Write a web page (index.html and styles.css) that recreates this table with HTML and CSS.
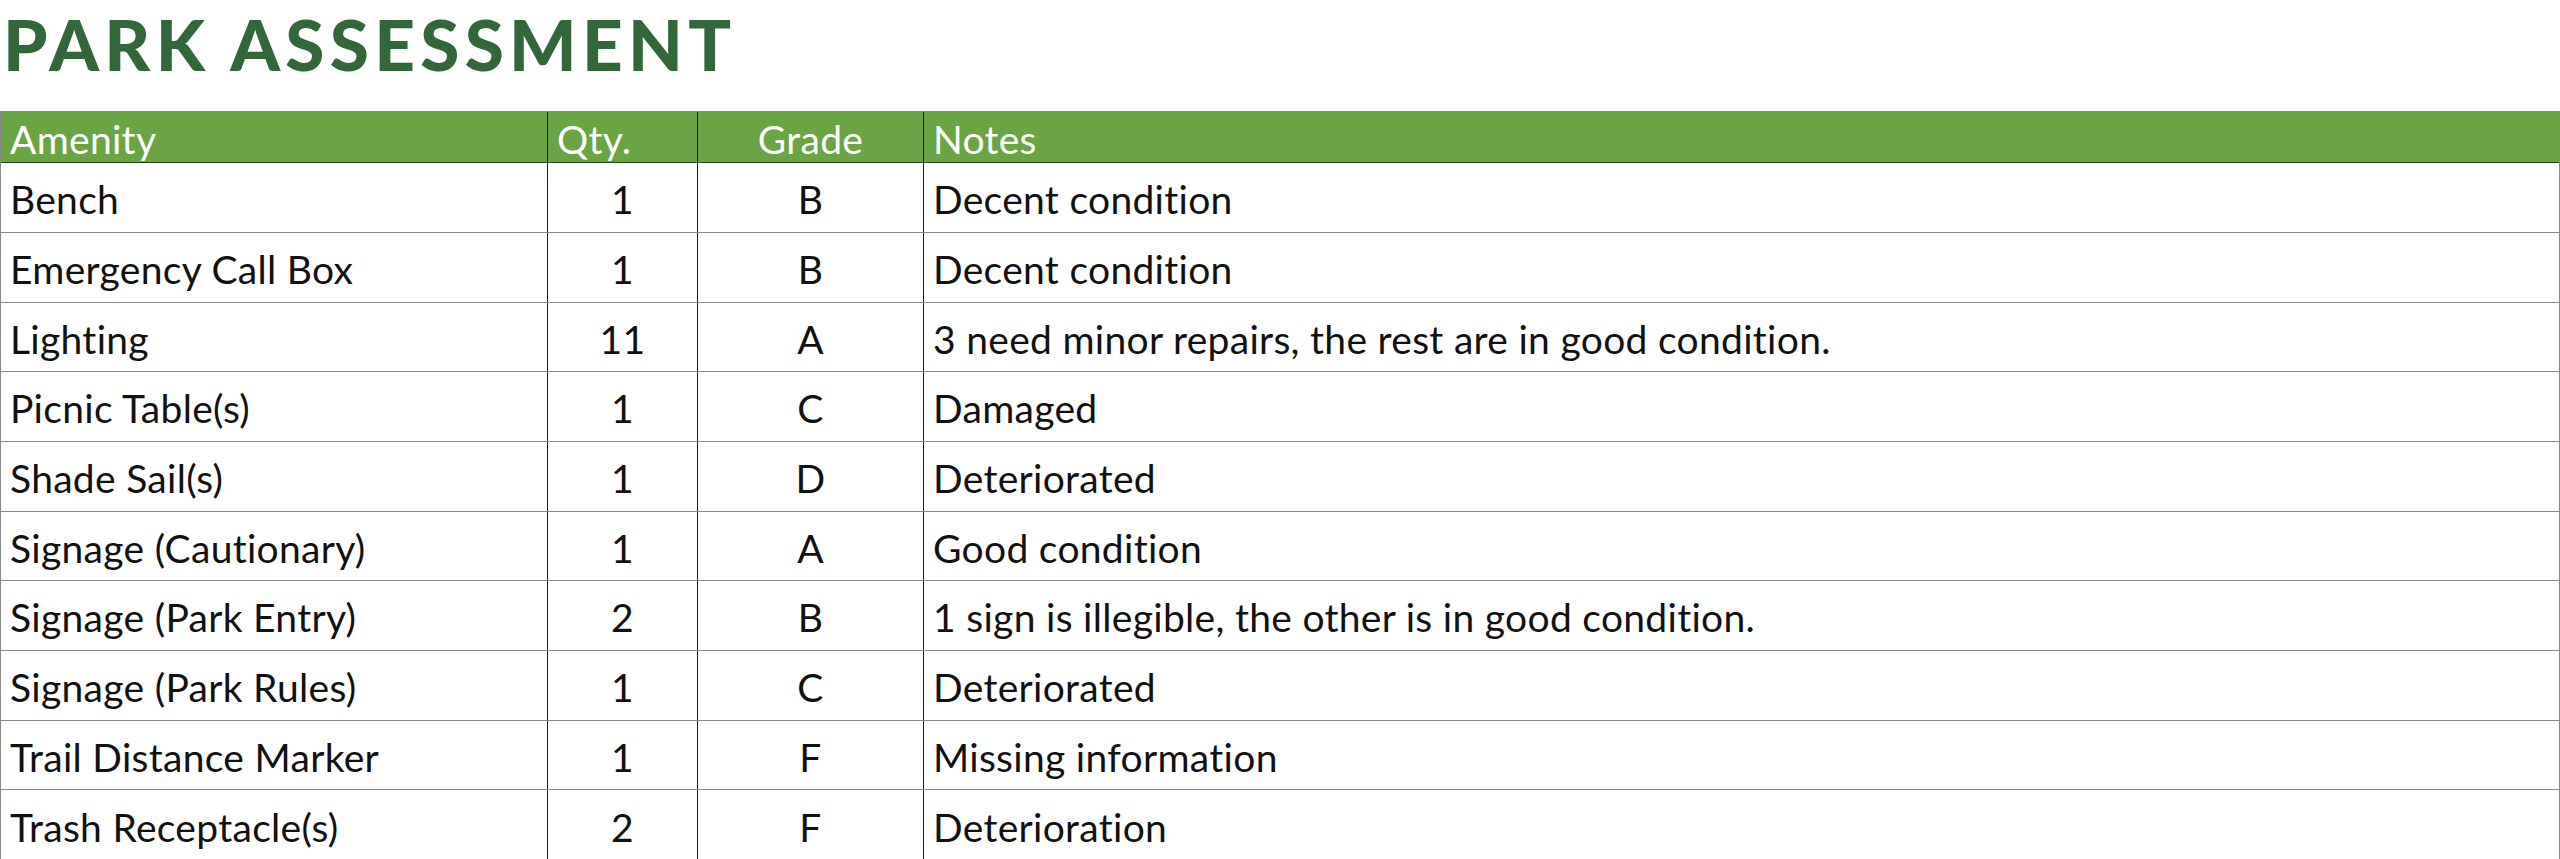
FILE: index.html
```html
<!DOCTYPE html>
<html lang="en">
<head>
<meta charset="utf-8">
<title>Park Assessment</title>
<link rel="stylesheet" href="styles.css">
</head>
<body>
<h1 class="title">PARK ASSESSMENT</h1>
<div class="table">
  <div class="row head">
    <div class="cell">Amenity</div>
    <div class="cell">Qty.</div>
    <div class="cell center">Grade</div>
    <div class="cell">Notes</div>
  </div>
  <div class="body">
    <div class="row"><div class="cell">Bench</div><div class="cell center">1</div><div class="cell center">B</div><div class="cell">Decent condition</div></div>
    <div class="row"><div class="cell">Emergency Call Box</div><div class="cell center">1</div><div class="cell center">B</div><div class="cell">Decent condition</div></div>
    <div class="row"><div class="cell">Lighting</div><div class="cell center">11</div><div class="cell center">A</div><div class="cell">3 need minor repairs, the rest are in good condition.</div></div>
    <div class="row"><div class="cell">Picnic Table(s)</div><div class="cell center">1</div><div class="cell center">C</div><div class="cell">Damaged</div></div>
    <div class="row"><div class="cell">Shade Sail(s)</div><div class="cell center">1</div><div class="cell center">D</div><div class="cell">Deteriorated</div></div>
    <div class="row"><div class="cell">Signage (Cautionary)</div><div class="cell center">1</div><div class="cell center">A</div><div class="cell">Good condition</div></div>
    <div class="row"><div class="cell">Signage (Park Entry)</div><div class="cell center">2</div><div class="cell center">B</div><div class="cell">1 sign is illegible, the other is in good condition.</div></div>
    <div class="row"><div class="cell">Signage (Park Rules)</div><div class="cell center">1</div><div class="cell center">C</div><div class="cell">Deteriorated</div></div>
    <div class="row"><div class="cell">Trail Distance Marker</div><div class="cell center">1</div><div class="cell center">F</div><div class="cell">Missing information</div></div>
    <div class="row"><div class="cell">Trash Receptacle(s)</div><div class="cell center">2</div><div class="cell center">F</div><div class="cell">Deterioration</div></div>
  </div>
</div>
</body>
</html>
```
FILE: styles.css
```css
html, body {
  margin: 0;
  padding: 0;
  background: #ffffff;
}
body {
  font-family: Lato, "Liberation Sans", sans-serif;
  color: #111111;
}
.title {
  margin: 0;
  padding: 0 0 24px 3px;
  font-size: 71px;
  line-height: 87px;
  font-weight: 900;
  letter-spacing: 5.3px;
  color: #33673b;
}
.table {
  border-left: 1px solid #8a8a8a;
  border-right: 1px solid #8a8a8a;
}
.row {
  display: grid;
  grid-template-columns: 547px 150px 226px 1fr;
  box-sizing: border-box;
  height: 70px;
  border-bottom: 1px solid #8a8a8a;
}
.body .row:nth-child(3n) {
  height: 69px;
}
.body .row:last-child {
  border-bottom: none;
}
.row.head {
  height: 52px;
  background: #6aa444;
  color: #ffffff;
  border-top: 1px solid #8a8a8a;
  border-bottom: 1px solid #2b4522;
}
.cell {
  display: flex;
  align-items: center;
  padding: 3px 0 0 9px;
  box-sizing: border-box;
  font-size: 39px;
  letter-spacing: 0.3px;
  white-space: nowrap;
  border-right: 1px solid #1e1e1e;
}
.row.head .cell {
  padding-top: 4px;
  font-weight: 400;
}
.cell:last-child {
  border-right: none;
}
.cell.center {
  justify-content: center;
  padding-left: 0;
}
```
